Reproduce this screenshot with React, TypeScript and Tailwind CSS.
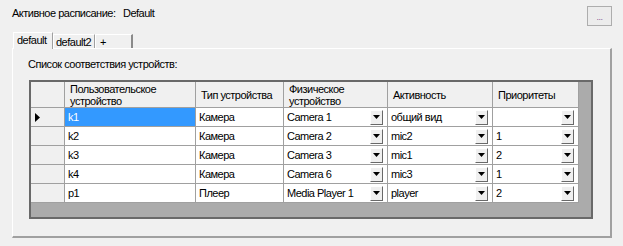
import React from "react";

// colonne della griglia: larghezza compresa la linea di destra
interface Column {
  title: string[];
  width: number;
  combo: boolean;
}

const columns: Column[] = [
  { title: ["Пользовательское", "устройство"], width: 131, combo: false },
  { title: ["Тип устройства"], width: 88, combo: false },
  { title: ["Физическое", "устройство"], width: 104, combo: true },
  { title: ["Активность"], width: 105, combo: true },
  { title: ["Приоритеты"], width: 86, combo: true },
];

const rows: string[][] = [
  ["k1", "Камера", "Camera 1", "общий вид", ""],
  ["k2", "Камера", "Camera 2", "mic2", "1"],
  ["k3", "Камера", "Camera 3", "mic1", "2"],
  ["k4", "Камера", "Camera 6", "mic3", "1"],
  ["p1", "Плеер", "Media Player 1", "player", "2"],
];

function DropButton() {
  return (
    <div className="ml-auto mr-[4px] flex h-[15px] w-[13px] shrink-0 items-center justify-center border-t border-l border-t-white border-l-white border-r border-b border-r-[#696969] border-b-[#696969] bg-[#f0f0f0]">
      <svg width="7" height="4" viewBox="0 0 7 4">
        <path d="M0 0h7L3.5 4z" fill="#000" />
      </svg>
    </div>
  );
}

function Grid() {
  return (
    <div className="ml-[16px] mt-[9px] flex h-[139px] w-[564px] flex-col border-2 border-[#696969] bg-[#ababab]">
      {/* intestazione */}
      <div className="flex h-[26px] shrink-0">
        <div className="h-full w-[34px] shrink-0 border-r border-b border-[#a0a0a0] bg-[#f0f0f0]" />
        {columns.map((col, idx) => (
          <div
            key={idx}
            style={{ width: col.width }}
            className="flex h-full shrink-0 flex-col justify-center border-r border-b border-[#a0a0a0] bg-[#f0f0f0] pl-[5px] leading-[12px]"
          >
            {col.title.map((t, i) => (
              <span key={i} className="whitespace-nowrap">{t}</span>
            ))}
          </div>
        ))}
      </div>
      {/* righe */}
      {rows.map((row, rIdx) => (
        <div key={rIdx} className="flex h-[19px] shrink-0">
          <div className="flex h-full w-[34px] shrink-0 items-center border-r border-b border-[#a0a0a0] bg-[#f0f0f0] pl-[4px]">
            {rIdx === 0 && (
              <svg width="5" height="9" viewBox="0 0 5 9">
                <path d="M0 0l5 4.5L0 9z" fill="#000" />
              </svg>
            )}
          </div>
          {row.map((cell, cIdx) => {
            const selected = rIdx === 0 && cIdx === 0;
            return (
              <div
                key={cIdx}
                style={{ width: columns[cIdx].width }}
                className={
                  selected
                    ? "flex h-full shrink-0 items-center border-r border-b border-[#a0a0a0] bg-[#3399ff] pl-[3px] text-white"
                    : "flex h-full shrink-0 items-center border-r border-b border-[#a0a0a0] bg-white pl-[3px]"
                }
              >
                <span className="whitespace-nowrap">{cell}</span>
                {columns[cIdx].combo && <DropButton />}
              </div>
            );
          })}
        </div>
      ))}
    </div>
  );
}

export default function App() {
  return (
    <div className="h-[246px] w-[623px] bg-[#f0f0f0] font-['Liberation_Sans',Arial,sans-serif] text-[11px] tracking-[-0.5px] text-black">
      {/* riga superiore */}
      <div className="flex h-[32px] pl-[12px] pr-[11px] pt-[6px]">
        <div className="flex h-[13px] pt-[1px] leading-[13px] whitespace-nowrap">
          <span className="w-[111px]">Активное расписание:</span>
          <span>Default</span>
        </div>
        <button className="ml-auto flex h-[20px] w-[25px] items-center justify-center border border-[#adadad] bg-[#ececec] pt-[3px] text-[9px] leading-[9px] text-[#8a5a9a]">
          ...
        </button>
      </div>

      {/* schede */}
      <div className="flex h-[16px] items-end pl-[13px] whitespace-nowrap">
        <div className="relative z-10 -mb-[1px] flex h-[17px] w-[40px] items-start border-t border-l border-white border-r border-r-[#a0a0a0] bg-[#f0f0f0] pl-[3px] pt-[1px] leading-[12px]">
          default
        </div>
        <div className="flex h-[14px] w-[42px] items-start border-t border-l border-white border-r border-r-[#a0a0a0] pl-[2px] pt-[1px] leading-[12px]">
          default2
        </div>
        <div className="flex h-[14px] w-[38px] items-start border-t border-l border-white border-r-2 border-r-[#8a8a8a] pl-[4px] pt-[1px] leading-[12px]">
          +
        </div>
      </div>

      {/* pannello */}
      <div className="ml-[12px] flex h-[190px] w-[600px] flex-col border-t border-l border-white border-r-2 border-b-2 border-r-[#a0a0a0] border-b-[#a0a0a0]">
        <div className="mt-[9px] h-[13px] pl-[15px] leading-[13px] whitespace-nowrap">Список соответствия устройств:</div>
        <Grid />
      </div>
    </div>
  );
}
